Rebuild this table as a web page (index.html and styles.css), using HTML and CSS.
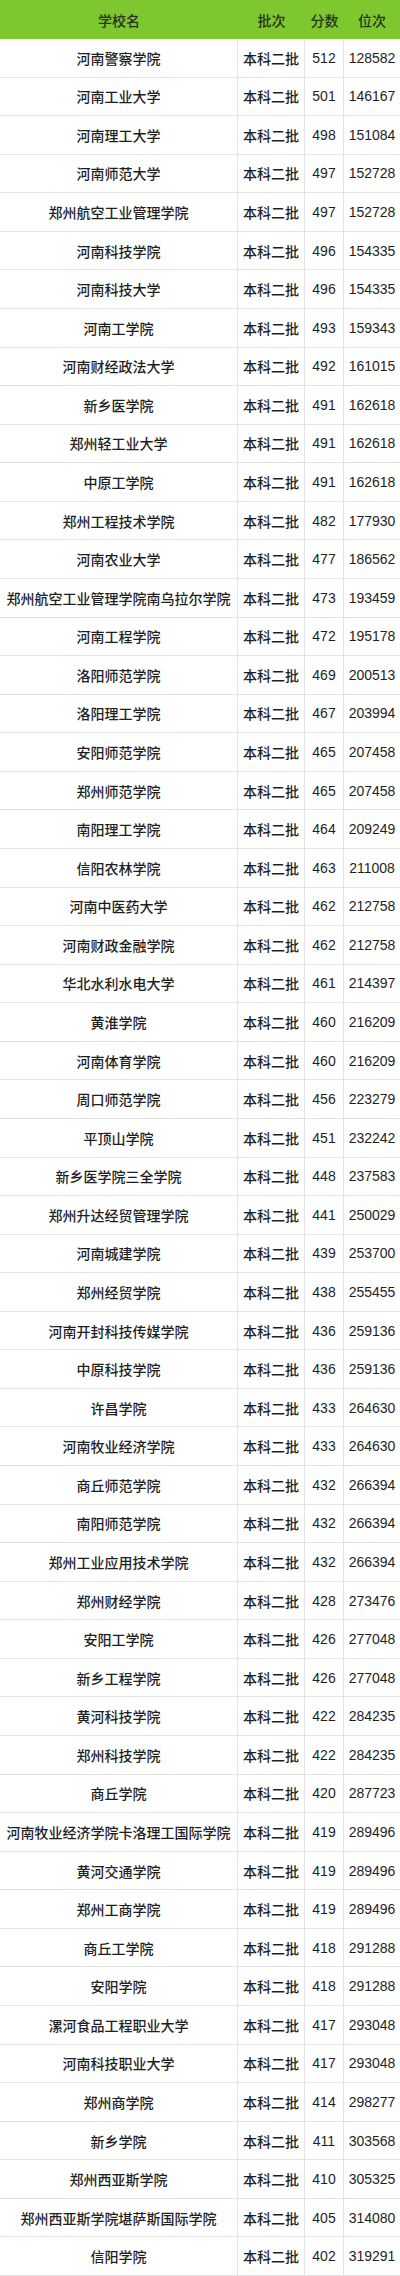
FILE: index.html
```html
<!DOCTYPE html>
<html lang="zh">
<head>
<meta charset="utf-8">
<title>录取分数</title>
<link rel="stylesheet" href="styles.css">
</head>
<body>
<div class="table">
  <div class="th">学校名</div><div class="th">批次</div><div class="th">分数</div><div class="th">位次</div>
  <div class="td">河南警察学院</div><div class="td">本科二批</div><div class="td">512</div><div class="td">128582</div>
  <div class="td">河南工业大学</div><div class="td">本科二批</div><div class="td">501</div><div class="td">146167</div>
  <div class="td">河南理工大学</div><div class="td">本科二批</div><div class="td">498</div><div class="td">151084</div>
  <div class="td">河南师范大学</div><div class="td">本科二批</div><div class="td">497</div><div class="td">152728</div>
  <div class="td">郑州航空工业管理学院</div><div class="td">本科二批</div><div class="td">497</div><div class="td">152728</div>
  <div class="td">河南科技学院</div><div class="td">本科二批</div><div class="td">496</div><div class="td">154335</div>
  <div class="td">河南科技大学</div><div class="td">本科二批</div><div class="td">496</div><div class="td">154335</div>
  <div class="td">河南工学院</div><div class="td">本科二批</div><div class="td">493</div><div class="td">159343</div>
  <div class="td">河南财经政法大学</div><div class="td">本科二批</div><div class="td">492</div><div class="td">161015</div>
  <div class="td">新乡医学院</div><div class="td">本科二批</div><div class="td">491</div><div class="td">162618</div>
  <div class="td">郑州轻工业大学</div><div class="td">本科二批</div><div class="td">491</div><div class="td">162618</div>
  <div class="td">中原工学院</div><div class="td">本科二批</div><div class="td">491</div><div class="td">162618</div>
  <div class="td">郑州工程技术学院</div><div class="td">本科二批</div><div class="td">482</div><div class="td">177930</div>
  <div class="td">河南农业大学</div><div class="td">本科二批</div><div class="td">477</div><div class="td">186562</div>
  <div class="td">郑州航空工业管理学院南乌拉尔学院</div><div class="td">本科二批</div><div class="td">473</div><div class="td">193459</div>
  <div class="td">河南工程学院</div><div class="td">本科二批</div><div class="td">472</div><div class="td">195178</div>
  <div class="td">洛阳师范学院</div><div class="td">本科二批</div><div class="td">469</div><div class="td">200513</div>
  <div class="td">洛阳理工学院</div><div class="td">本科二批</div><div class="td">467</div><div class="td">203994</div>
  <div class="td">安阳师范学院</div><div class="td">本科二批</div><div class="td">465</div><div class="td">207458</div>
  <div class="td">郑州师范学院</div><div class="td">本科二批</div><div class="td">465</div><div class="td">207458</div>
  <div class="td">南阳理工学院</div><div class="td">本科二批</div><div class="td">464</div><div class="td">209249</div>
  <div class="td">信阳农林学院</div><div class="td">本科二批</div><div class="td">463</div><div class="td">211008</div>
  <div class="td">河南中医药大学</div><div class="td">本科二批</div><div class="td">462</div><div class="td">212758</div>
  <div class="td">河南财政金融学院</div><div class="td">本科二批</div><div class="td">462</div><div class="td">212758</div>
  <div class="td">华北水利水电大学</div><div class="td">本科二批</div><div class="td">461</div><div class="td">214397</div>
  <div class="td">黄淮学院</div><div class="td">本科二批</div><div class="td">460</div><div class="td">216209</div>
  <div class="td">河南体育学院</div><div class="td">本科二批</div><div class="td">460</div><div class="td">216209</div>
  <div class="td">周口师范学院</div><div class="td">本科二批</div><div class="td">456</div><div class="td">223279</div>
  <div class="td">平顶山学院</div><div class="td">本科二批</div><div class="td">451</div><div class="td">232242</div>
  <div class="td">新乡医学院三全学院</div><div class="td">本科二批</div><div class="td">448</div><div class="td">237583</div>
  <div class="td">郑州升达经贸管理学院</div><div class="td">本科二批</div><div class="td">441</div><div class="td">250029</div>
  <div class="td">河南城建学院</div><div class="td">本科二批</div><div class="td">439</div><div class="td">253700</div>
  <div class="td">郑州经贸学院</div><div class="td">本科二批</div><div class="td">438</div><div class="td">255455</div>
  <div class="td">河南开封科技传媒学院</div><div class="td">本科二批</div><div class="td">436</div><div class="td">259136</div>
  <div class="td">中原科技学院</div><div class="td">本科二批</div><div class="td">436</div><div class="td">259136</div>
  <div class="td">许昌学院</div><div class="td">本科二批</div><div class="td">433</div><div class="td">264630</div>
  <div class="td">河南牧业经济学院</div><div class="td">本科二批</div><div class="td">433</div><div class="td">264630</div>
  <div class="td">商丘师范学院</div><div class="td">本科二批</div><div class="td">432</div><div class="td">266394</div>
  <div class="td">南阳师范学院</div><div class="td">本科二批</div><div class="td">432</div><div class="td">266394</div>
  <div class="td">郑州工业应用技术学院</div><div class="td">本科二批</div><div class="td">432</div><div class="td">266394</div>
  <div class="td">郑州财经学院</div><div class="td">本科二批</div><div class="td">428</div><div class="td">273476</div>
  <div class="td">安阳工学院</div><div class="td">本科二批</div><div class="td">426</div><div class="td">277048</div>
  <div class="td">新乡工程学院</div><div class="td">本科二批</div><div class="td">426</div><div class="td">277048</div>
  <div class="td">黄河科技学院</div><div class="td">本科二批</div><div class="td">422</div><div class="td">284235</div>
  <div class="td">郑州科技学院</div><div class="td">本科二批</div><div class="td">422</div><div class="td">284235</div>
  <div class="td">商丘学院</div><div class="td">本科二批</div><div class="td">420</div><div class="td">287723</div>
  <div class="td">河南牧业经济学院卡洛理工国际学院</div><div class="td">本科二批</div><div class="td">419</div><div class="td">289496</div>
  <div class="td">黄河交通学院</div><div class="td">本科二批</div><div class="td">419</div><div class="td">289496</div>
  <div class="td">郑州工商学院</div><div class="td">本科二批</div><div class="td">419</div><div class="td">289496</div>
  <div class="td">商丘工学院</div><div class="td">本科二批</div><div class="td">418</div><div class="td">291288</div>
  <div class="td">安阳学院</div><div class="td">本科二批</div><div class="td">418</div><div class="td">291288</div>
  <div class="td">漯河食品工程职业大学</div><div class="td">本科二批</div><div class="td">417</div><div class="td">293048</div>
  <div class="td">河南科技职业大学</div><div class="td">本科二批</div><div class="td">417</div><div class="td">293048</div>
  <div class="td">郑州商学院</div><div class="td">本科二批</div><div class="td">414</div><div class="td">298277</div>
  <div class="td">新乡学院</div><div class="td">本科二批</div><div class="td">411</div><div class="td">303568</div>
  <div class="td">郑州西亚斯学院</div><div class="td">本科二批</div><div class="td">410</div><div class="td">305325</div>
  <div class="td">郑州西亚斯学院堪萨斯国际学院</div><div class="td">本科二批</div><div class="td">405</div><div class="td">314080</div>
  <div class="td">信阳学院</div><div class="td">本科二批</div><div class="td">402</div><div class="td">319291</div>
</div>
</body>
</html>
```
FILE: styles.css
```css
html, body {
  margin: 0;
  padding: 0;
  background: #ffffff;
}

.table {
  width: 400px;
  height: 2276px;
  display: grid;
  grid-template-columns: 238px 67px 39px 56px;
  grid-template-rows: 39px repeat(58, 1fr);
  font-family: "Liberation Sans", "Noto Sans CJK SC", sans-serif;
  font-size: 14px;
  font-weight: 500;
  color: #1e1e1e;
}

.th {
  background: #7cc82e;
  color: #2a3320;
  display: flex;
  align-items: center;
  justify-content: center;
  white-space: nowrap;
}

.td {
  display: flex;
  align-items: center;
  justify-content: center;
  white-space: nowrap;
  border-bottom: 1px solid #e4e4e4;
  border-right: 1px solid #e4e4e4;
  box-sizing: border-box;
}

.td:nth-child(4n) {
  border-right: none;
}
```
